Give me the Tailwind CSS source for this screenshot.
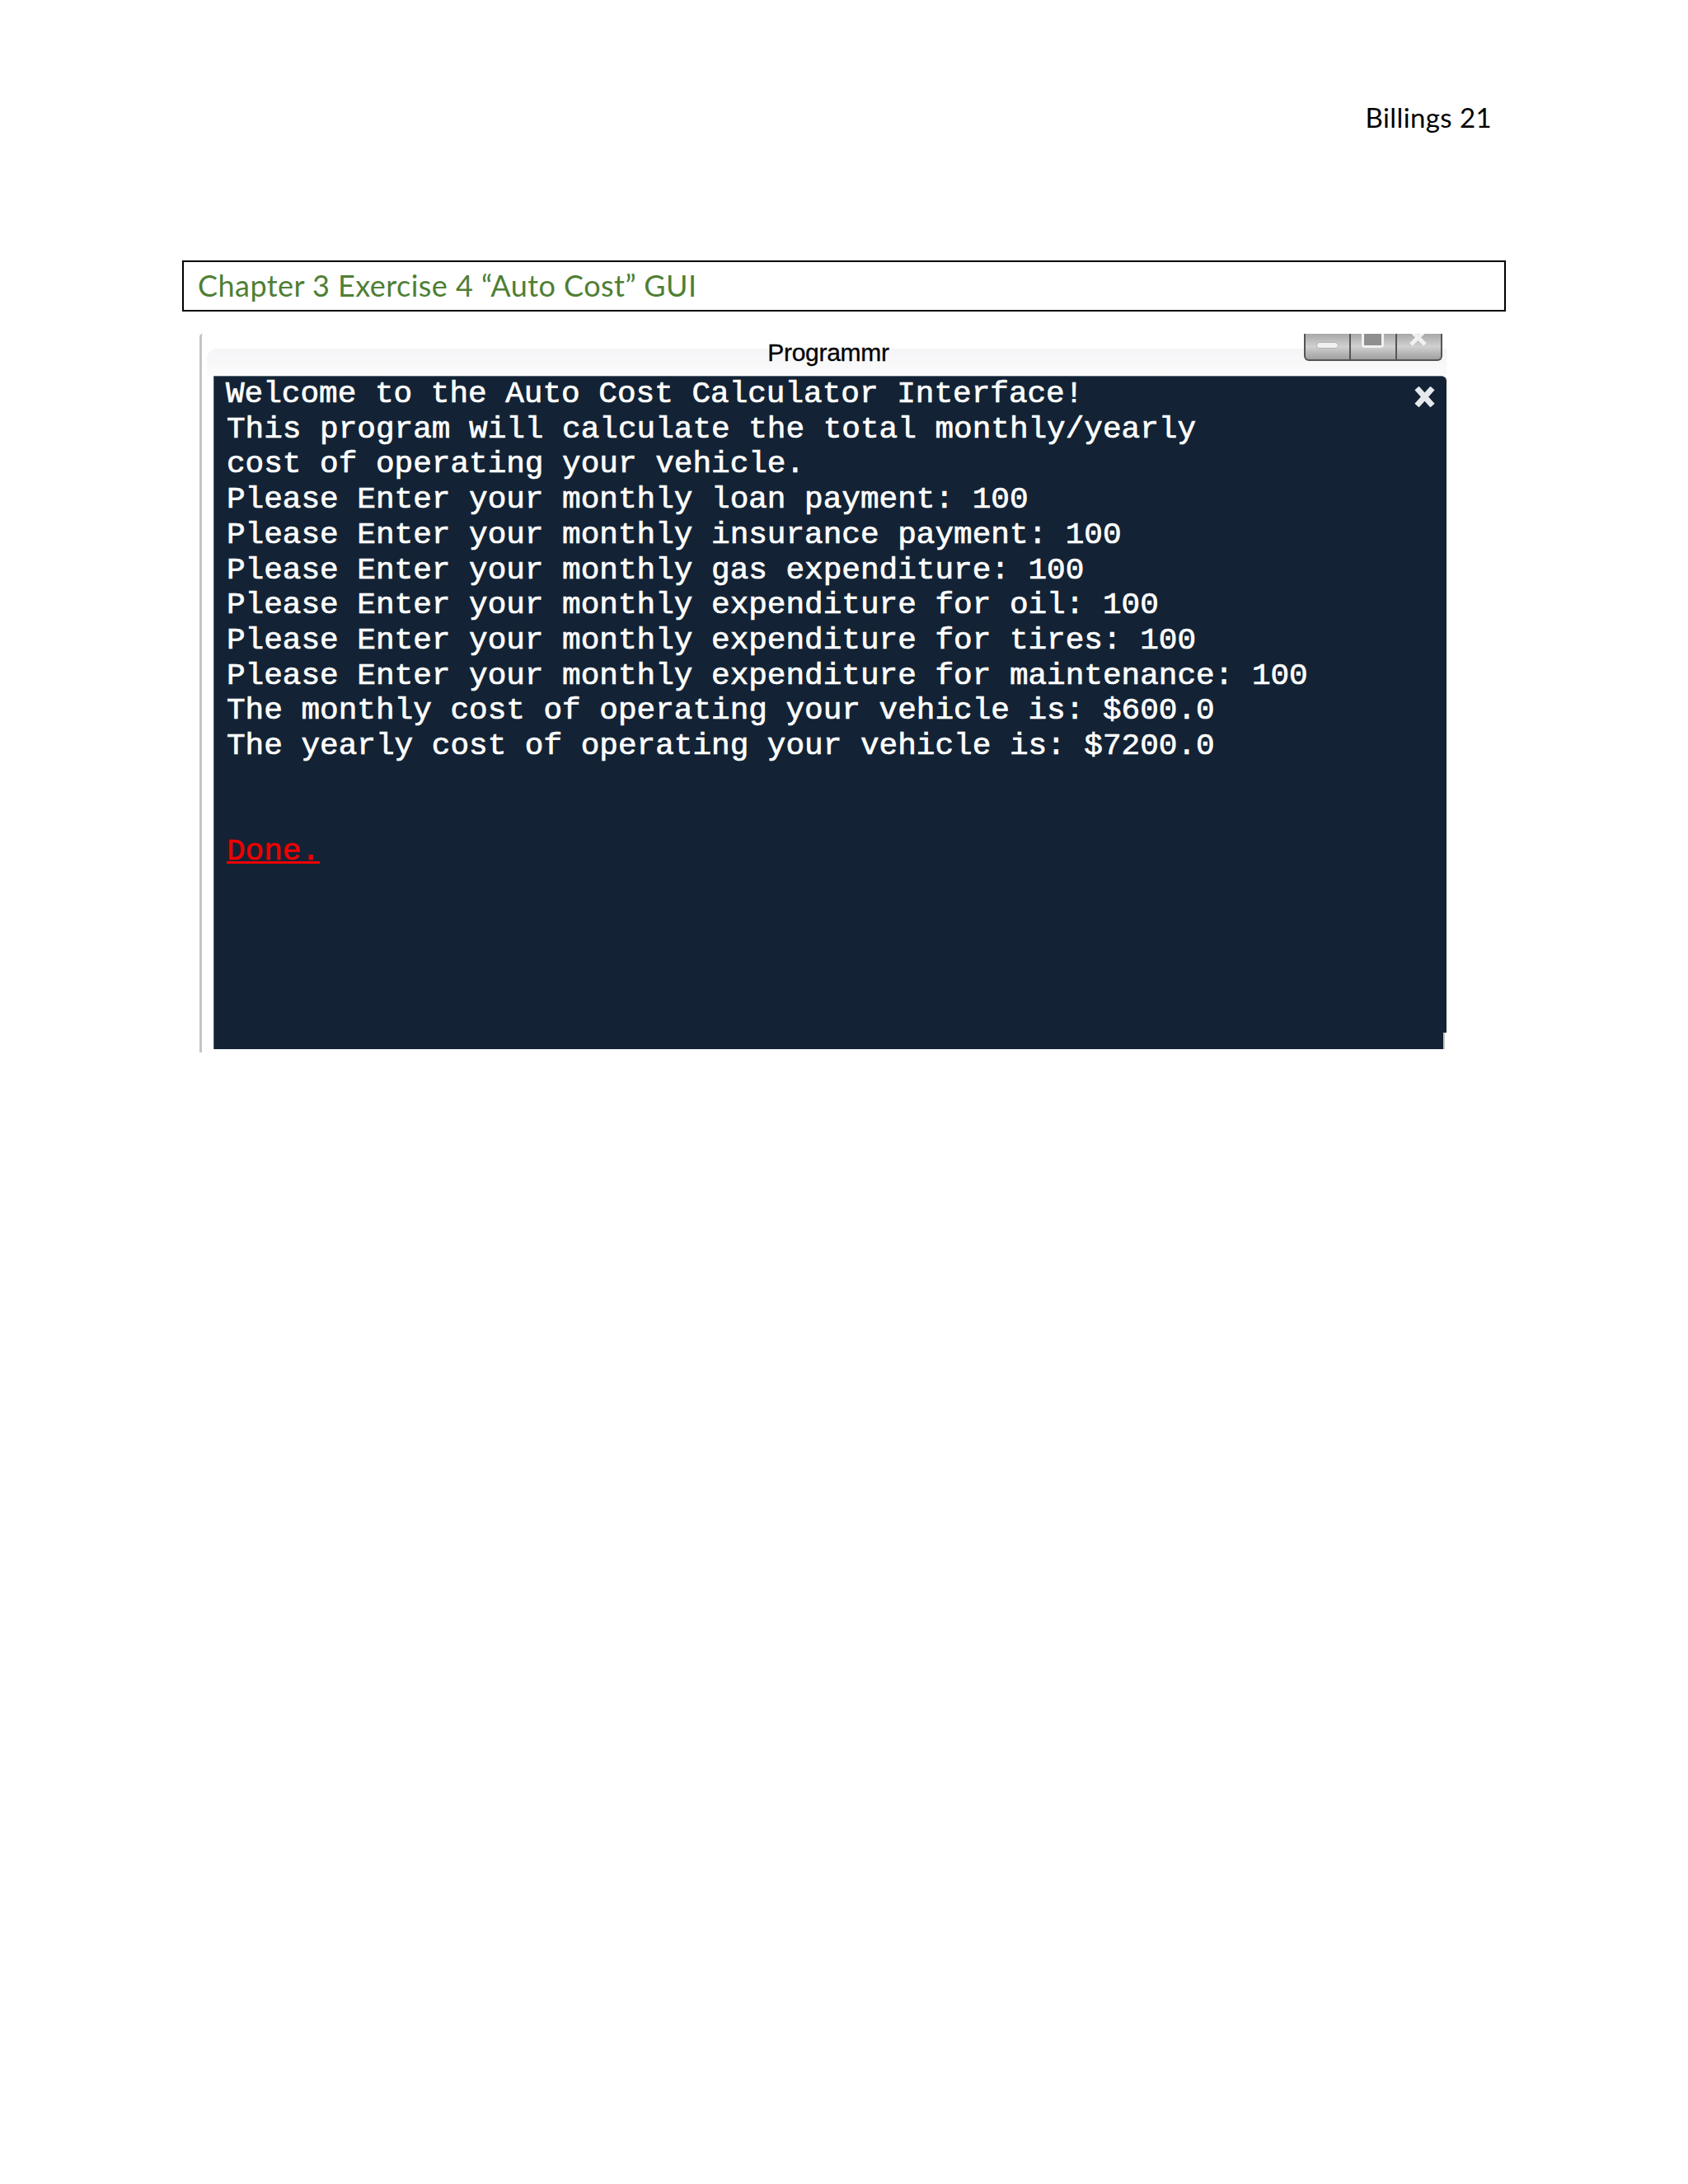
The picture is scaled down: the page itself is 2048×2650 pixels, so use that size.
<!DOCTYPE html>
<html>
<head>
<meta charset="utf-8">
<title>Billings 21</title>
<script src="https://cdn.jsdelivr.net/npm/@tailwindcss/browser@4"></script>
</head>
<body class="bg-white">
<div class="w-[2048px] h-[2650px] pt-[120px] pl-[221px] pr-[221px]">
	<p class="h-[46px] mb-[150px] pr-[17px] text-right text-[33px] tracking-[0.4px] leading-[45px] text-black font-['Lato',sans-serif]">Billings 21</p>
	<h2 class="h-[62px] w-[1606px] border-2 border-black px-[17px] text-[36px] tracking-[0.45px] leading-[57px] text-[#4f7f35] font-['Lato',sans-serif]">Chapter 3 Exercise 4 “Auto Cost” GUI</h2>

	<div class="relative mt-[27px] ml-[21px] w-[1513px] h-[872px] border-l-[3px] border-[#c4c4c4] rounded-tl-sm">
		<!-- title bar -->
		<div class="ml-[6px] mt-[18px] h-[33px] flex items-center justify-center rounded-tl-xl bg-gradient-to-b from-[#f5f5f7] to-[#fbfbfc] absolute top-0 left-0 right-0">
			<span class="mb-[24px] ml-[4px] text-[30px] tracking-[-0.3px] text-black [-webkit-text-stroke:0.3px] font-['Liberation_Sans',sans-serif]">Programmr</span>
		</div>
		<!-- window buttons -->
		<div class="absolute top-0 left-[1337px] w-[168px] h-[33px] flex border-2 border-t-0 border-[#555] rounded-b-md bg-gradient-to-b from-[#a8a8a8] via-[#d0d0d0] to-[#a0a0a0]">
			<div class="flex-1 flex items-center justify-center border-r-2 border-[#555]"><div class="w-[27px] h-[8px] -mt-[4px] rounded-sm border border-[#b0b0b0] bg-[#f1f1f1]"></div></div>
			<div class="flex-1 flex items-start justify-center border-r-2 border-[#555]"><div class="w-[27px] h-[17px] border-[3px] border-t-0 border-[#f1f1f1] rounded-b-sm bg-[#8f8f8f]"></div></div>
			<div class="flex-1 flex items-start justify-center">
				<svg class="w-[26px] h-[17px]" viewBox="0 0 26 17"><path d="M4 -4 L21 13 M21 -4 L4 13" stroke="#f1f1f1" stroke-width="5" fill="none"/></svg>
			</div>
		</div>
		<!-- console -->
		<div class="absolute top-[51px] left-[14px] w-[1496px] h-[817px] rounded-tr-md bg-[#132335] border-t border-l border-t-[#5a6b7c] border-l-[#4a5a6a] pl-[15px] font-['Liberation_Mono',monospace] text-[37.7px] leading-[42.7px] text-white [-webkit-text-stroke:0.7px] whitespace-nowrap">
			<svg class="absolute top-[12px] right-[14px] w-[25px] h-[25px]" viewBox="0 0 25 25"><path d="M3 2 L22 23 M22 2 L3 23" stroke="#e6eaec" stroke-width="7" fill="none"/></svg>
			<!-- notch in the bottom right corner -->
			<div class="absolute bottom-0 right-0 w-[4px] h-[20px] bg-white border-l-2 border-[#c4c4c4]"></div>
			<div class="-ml-[1px]">Welcome to the Auto Cost Calculator Interface!</div>
			<div>This program will calculate the total monthly/yearly</div>
			<div>cost of operating your vehicle.</div>
			<div>Please Enter your monthly loan payment: 100</div>
			<div>Please Enter your monthly insurance payment: 100</div>
			<div>Please Enter your monthly gas expenditure: 100</div>
			<div>Please Enter your monthly expenditure for oil: 100</div>
			<div>Please Enter your monthly expenditure for tires: 100</div>
			<div>Please Enter your monthly expenditure for maintenance: 100</div>
			<div>The monthly cost of operating your vehicle is: $600.0</div>
			<div>The yearly cost of operating your vehicle is: $7200.0</div>
			<div class="h-[85.4px]"></div>
			<div class="text-[#f00000] underline">Done.</div>
		</div>
	</div>
</div>
</body>
</html>
